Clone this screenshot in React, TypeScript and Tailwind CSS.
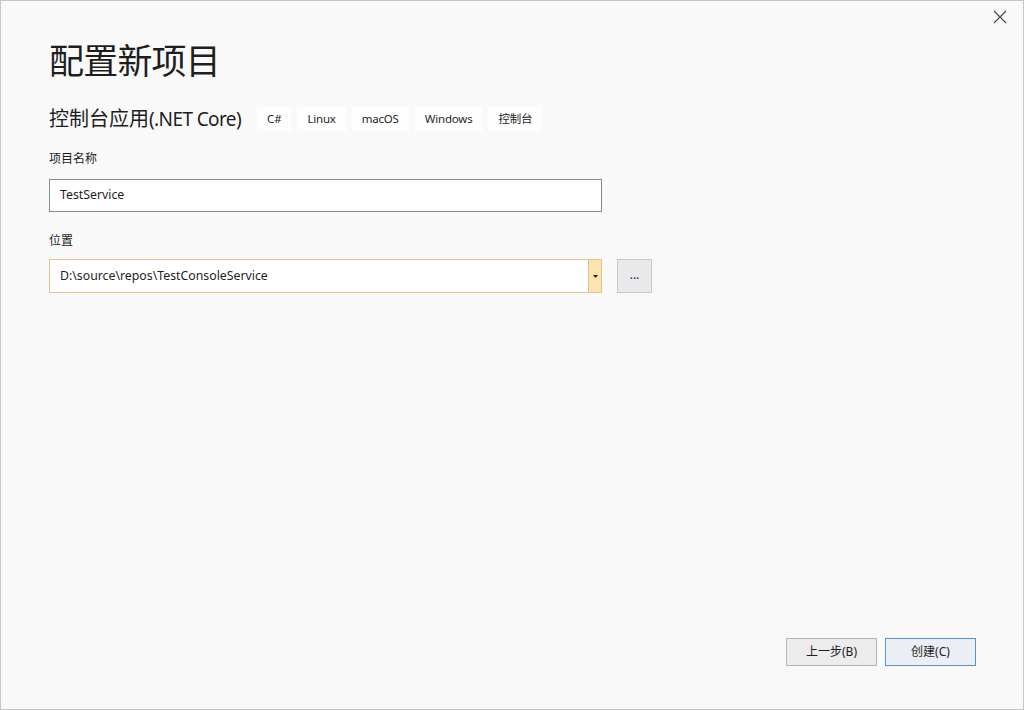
import { ReactNode } from 'react';

const tags = ['C#', 'Linux', 'macOS', 'Windows', '控制台'];

const Label = ({ children, className }: { children: ReactNode; className?: string }) => (
  <div className={`text-[12px] leading-none text-[#1e1e1e] ${className ?? ''}`}>{children}</div>
);

const App = () => {
  return (
    <div className="w-[1024px] h-[710px] border border-[#c6c6c6] bg-[#f9f9f9] flex flex-col font-['Noto_Sans','Noto_Sans_CJK_SC',sans-serif] text-[#1e1e1e]">
      {/* Close */}
      <div className="h-[42px] flex justify-end pt-[9px] pr-[16px]">
        <svg width="14" height="14" viewBox="0 0 14 14" className="text-[#444]">
          <path d="M1 1L13 13M13 1L1 13" stroke="currentColor" strokeWidth="1.1" />
        </svg>
      </div>

      <div className="flex-1 flex flex-col pl-[48px]">
        <h1 className="text-[35px] leading-none font-normal tracking-[-0.8px]">配置新项目</h1>

        {/* Template + tags */}
        <div className="mt-[29px] h-[24px] flex items-center">
          <span className="text-[20px] leading-none">
            控制台应用<span className="text-[19px] tracking-[-0.6px]">(.NET Core)</span>
          </span>
          <div className="ml-[16px] flex gap-[6px]">
            {tags.map((t) => (
              <span key={t} className="h-[24px] px-[10px] flex items-center bg-[#fefefe] text-[11.5px] leading-none tracking-[-0.2px] text-[#1e1e1e]">
                {t}
              </span>
            ))}
          </div>
        </div>

        <Label className="mt-[22px]">项目名称</Label>
        <div className="mt-[14px] w-[553px] h-[33px] border border-[#8a8a8a] bg-white flex items-center pl-[10px] text-[12.3px]">
          TestService
        </div>

        <Label className="mt-[23px]">位置</Label>
        <div className="mt-[12px] flex">
          <div className="w-[553px] h-[34px] border border-[#e1c48c] bg-white flex">
            <div className="flex-1 flex items-center pl-[10px] text-[12.3px]">D:\source\repos\TestConsoleService</div>
            <div className="w-[13px] border-l border-[#e1c48c] bg-[#fde3ad] flex items-center justify-center">
              <svg width="5" height="3" viewBox="0 0 5 3">
                <path d="M0 0H5L2.5 3Z" fill="#1e1e1e" />
              </svg>
            </div>
          </div>
          <div className="ml-[15px] w-[35px] h-[34px] border border-[#c9c9cc] bg-[#e9e9ec] flex items-center justify-center text-[12px] leading-none pb-[3px]">
            ...
          </div>
        </div>

        <div className="flex-1" />

        {/* Footer buttons */}
        <div className="flex justify-end gap-[8px] pr-[47px] pb-[43px]">
          <button className="w-[91px] h-[28px] border border-[#b4b4b4] bg-[#ececec] text-[12px] leading-none">
            上一步(B)
          </button>
          <button className="w-[91px] h-[28px] border border-[#5b93c7] bg-[#ebeef4] text-[12px] leading-none">
            创建(C)
          </button>
        </div>
      </div>
    </div>
  );
};

export default App;
